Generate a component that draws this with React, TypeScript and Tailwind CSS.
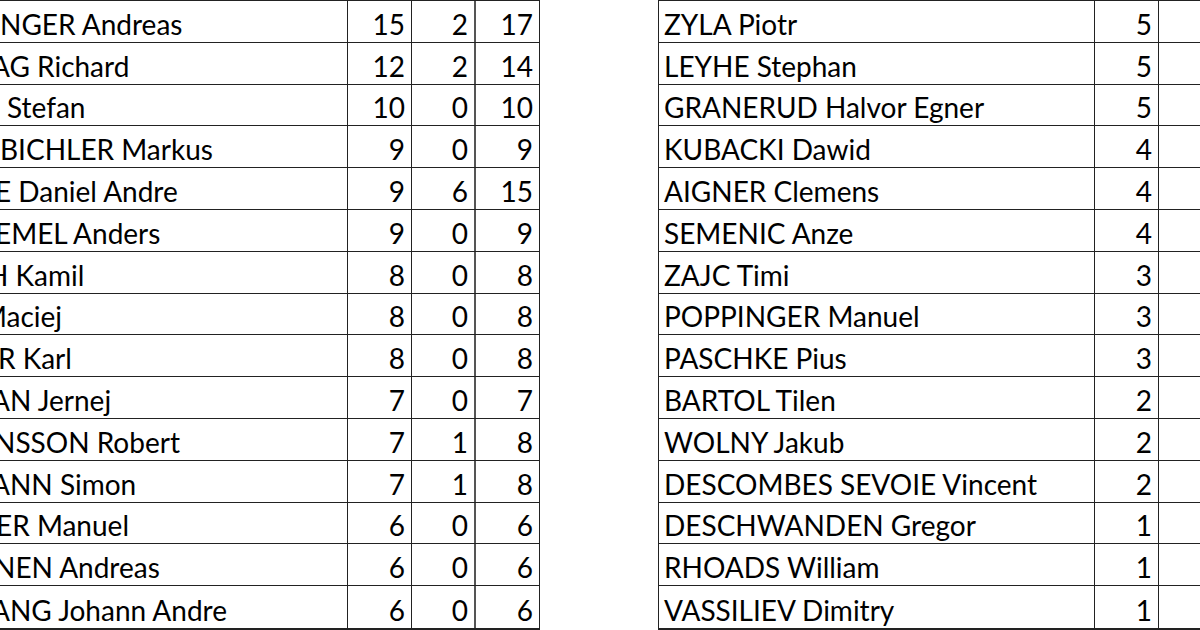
const left: [string, number, number, number, number][] = [
  ["NGER Andreas", 0, 15, 2, 17],
  ["AG Richard", -9, 12, 2, 14],
  ["Stefan", 7, 10, 0, 10],
  ["BICHLER Markus", 0, 9, 0, 9],
  ["E Daniel Andre", -5, 9, 6, 15],
  ["EMEL Anders", -5, 9, 0, 9],
  ["H Kamil", -13, 8, 0, 8],
  ["Maciej", -19, 8, 0, 8],
  ["R Karl", -2, 8, 0, 8],
  ["AN Jernej", -9, 7, 0, 7],
  ["NSSON Robert", -6, 7, 1, 8],
  ["ANN Simon", -9, 7, 1, 8],
  ["ER Manuel", -4, 6, 0, 6],
  ["NEN Andreas", -6, 6, 0, 6],
  ["ANG Johann Andre", -9, 6, 0, 6],
];

const right: [string, number][] = [
  ["ZYLA Piotr", 5],
  ["LEYHE Stephan", 5],
  ["GRANERUD Halvor Egner", 5],
  ["KUBACKI Dawid", 4],
  ["AIGNER Clemens", 4],
  ["SEMENIC Anze", 4],
  ["ZAJC Timi", 3],
  ["POPPINGER Manuel", 3],
  ["PASCHKE Pius", 3],
  ["BARTOL Tilen", 2],
  ["WOLNY Jakub", 2],
  ["DESCOMBES SEVOIE Vincent", 2],
  ["DESCHWANDEN Gregor", 1],
  ["RHOADS William", 1],
  ["VASSILIEV Dimitry", 1],
];

const Num = ({ v, thick }: { v: number; thick?: boolean }) => (
  <div
    className={`flex items-end justify-end pr-[6px] pb-[4px] border-r ${
      thick ? "border-r-2 border-r-[#555]" : "border-r-[#222]"
    }`}
  >
    {v}
  </div>
);

export default function App() {
  return (
    <div
      className="w-[1200px] h-[630px] overflow-hidden bg-white text-black flex text-[28px] leading-none"
      style={{ fontFamily: "Lato, 'Open Sans', sans-serif" }}
    >
      {/* left sheet, scrolled so names are cut */}
      <div className="w-[540px] shrink-0 h-[630px] border-t border-b-2 border-[#222] grid grid-rows-[repeat(15,1fr)]">
        {left.map(([name, off, a, b, c], i) => (
          <div
            key={i}
            className={`grid grid-cols-[348px_64px_64px_64px] ${
              i < 14 ? "border-b border-[#222]" : ""
            }`}
          >
            <div className="overflow-hidden border-r border-[#222] flex items-end pb-[4px] whitespace-nowrap">
              <span style={{ marginLeft: off }}>{name}</span>
            </div>
            <Num v={a} />
            <Num v={b} thick />
            <Num v={c} />
          </div>
        ))}
      </div>

      <div className="w-[118px] shrink-0" />

      {/* right sheet */}
      <div className="flex-1 h-[630px] border-t border-b-2 border-l border-[#222] grid grid-rows-[repeat(15,1fr)]">
        {right.map(([name, v], i) => (
          <div
            key={i}
            className={`grid grid-cols-[436px_64px_1fr] ${
              i < 14 ? "border-b border-[#222]" : ""
            }`}
          >
            <div className="border-r border-[#222] flex items-end pl-[5px] pb-[4px] whitespace-nowrap">
              {name}
            </div>
            <Num v={v} />
            <div />
          </div>
        ))}
      </div>
    </div>
  );
}
